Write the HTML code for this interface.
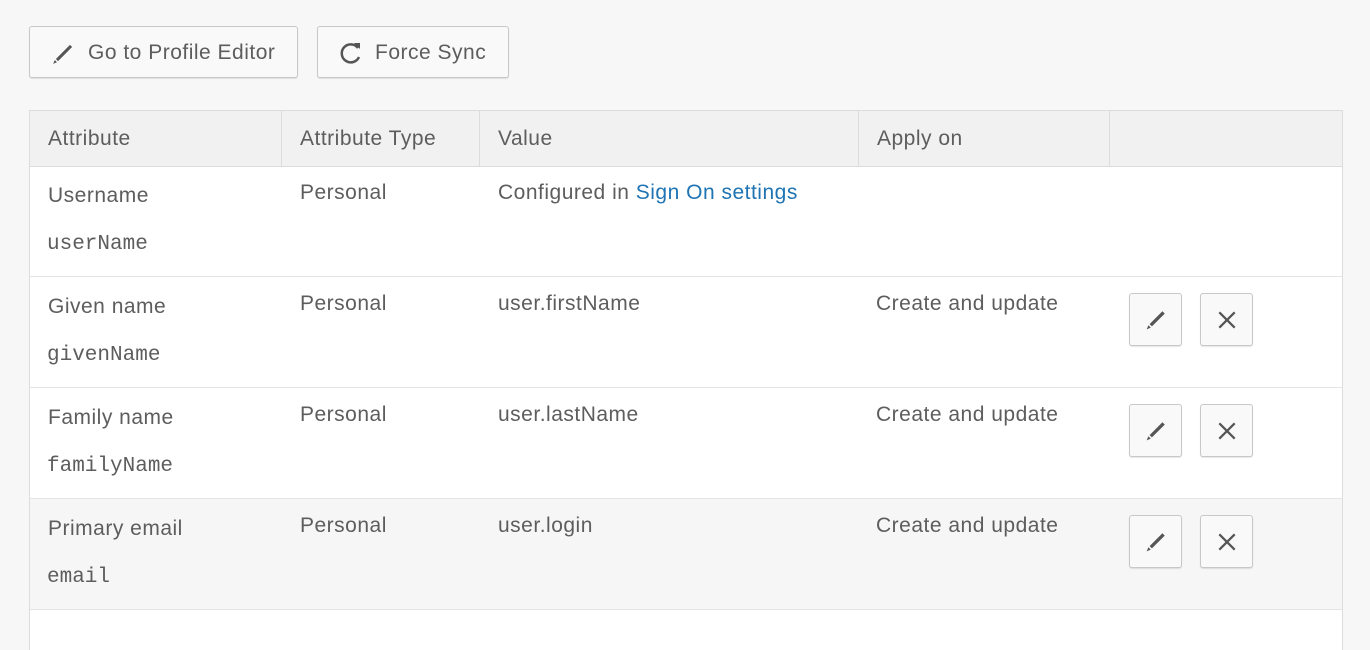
<!DOCTYPE html>
<html><head><style>
body{margin:0;width:1370px;height:644px;background:#f7f7f7;font-family:"Liberation Sans",sans-serif;color:#5d5d5d;overflow:hidden;position:relative;letter-spacing:0.5px}
.btn{position:absolute;top:26px;height:52px;border:1px solid #c8c8c8;border-radius:3px;background:#f9f9f9;box-shadow:0 1px 1px rgba(0,0,0,.1);font-size:21px;line-height:52px;box-sizing:border-box}
.tbl{position:absolute;left:29px;top:110px;width:1314px;height:540px;background:#fff;border:1px solid #dcdcdc;border-bottom:none;box-sizing:border-box}
.hdr{position:absolute;left:0;top:0;width:1312px;height:55px;background:#f1f1f1;border-bottom:1px solid #dcdcdc}
.hc{position:absolute;top:0;height:55px;line-height:55px;font-size:21px;padding-left:18px;border-right:1px solid #dcdcdc;box-sizing:border-box}
.row{position:absolute;left:0;width:1312px;height:111px;border-bottom:1px solid #e4e4e4;box-sizing:border-box}
.c{position:absolute;top:15px;font-size:21px}
.mono{position:absolute;left:17px;top:67px;font-family:"Liberation Mono",monospace;font-size:21px;letter-spacing:0}
.ab{position:absolute;top:16px;width:53px;height:53px;border:1px solid #c8c8c8;border-radius:3px;background:#f9f9f9;box-shadow:0 1px 1px rgba(0,0,0,.1);box-sizing:border-box;display:flex;align-items:center;justify-content:center}
</style></head><body>
<div class="btn" style="left:29px;width:269px;padding-left:58px">
<svg style="position:absolute;left:21px;top:14px" width="26" height="24" viewBox="0 0 24 22"><path d="M4.5 16.5 L17.5 3.5 L19.5 5.5 L6.5 18.5 Z" fill="#555"/><path d="M3.5 17.5 L5.5 19.5 L2 21 Z" fill="#555"/></svg>Go to Profile Editor</div>
<div class="btn" style="left:317px;width:192px;padding-left:57px">
<svg style="position:absolute;left:20px;top:13px" width="26" height="26" viewBox="0 0 26 26"><path d="M20 8 A9 9 0 1 0 21 17" fill="none" stroke="#555" stroke-width="2.5"/><path d="M16 3 L22 3 L22 9 Z" fill="#555"/></svg>Force Sync</div>
<div class="tbl">
<div class="hdr">
<div class="hc" style="left:0;width:252px">Attribute</div>
<div class="hc" style="left:252px;width:198px">Attribute Type</div>
<div class="hc" style="left:450px;width:379px">Value</div>
<div class="hc" style="left:829px;width:251px">Apply on</div>
</div>
<div class="row" style="top:55px"><div class="c" style="left:18px;top:18px">Username</div><div class="mono">userName</div><div class="c" style="left:270px">Personal</div><div class="c" style="left:468px">Configured in <span style="color:#1f74b3">Sign On settings</span></div></div>
<div class="row" style="top:166px"><div class="c" style="left:18px;top:18px">Given name</div><div class="mono">givenName</div><div class="c" style="left:270px">Personal</div><div class="c" style="left:468px">user.firstName</div><div class="c" style="left:846px">Create and update</div>
<div class="ab" style="left:1099px"><svg width="28" height="28" viewBox="0 0 24 24"><path d="M6.5 15.5 L17.5 4.5 L19.5 6.5 L8.5 17.5 Z" fill="#555"/><path d="M5.5 16.5 L7.5 18.5 L4 20 Z" fill="#555"/></svg></div>
<div class="ab" style="left:1170px"><svg width="22" height="22" viewBox="0 0 20 20"><path d="M3 3 L17 17 M17 3 L3 17" stroke="#555" stroke-width="2"/></svg></div></div>
<div class="row" style="top:277px"><div class="c" style="left:18px;top:18px">Family name</div><div class="mono">familyName</div><div class="c" style="left:270px">Personal</div><div class="c" style="left:468px">user.lastName</div><div class="c" style="left:846px">Create and update</div>
<div class="ab" style="left:1099px"><svg width="28" height="28" viewBox="0 0 24 24"><path d="M6.5 15.5 L17.5 4.5 L19.5 6.5 L8.5 17.5 Z" fill="#555"/><path d="M5.5 16.5 L7.5 18.5 L4 20 Z" fill="#555"/></svg></div>
<div class="ab" style="left:1170px"><svg width="22" height="22" viewBox="0 0 20 20"><path d="M3 3 L17 17 M17 3 L3 17" stroke="#555" stroke-width="2"/></svg></div></div>
<div class="row" style="top:388px;background:#f6f6f6"><div class="c" style="left:18px;top:18px">Primary email</div><div class="mono">email</div><div class="c" style="left:270px">Personal</div><div class="c" style="left:468px">user.login</div><div class="c" style="left:846px">Create and update</div>
<div class="ab" style="left:1099px"><svg width="28" height="28" viewBox="0 0 24 24"><path d="M6.5 15.5 L17.5 4.5 L19.5 6.5 L8.5 17.5 Z" fill="#555"/><path d="M5.5 16.5 L7.5 18.5 L4 20 Z" fill="#555"/></svg></div>
<div class="ab" style="left:1170px"><svg width="22" height="22" viewBox="0 0 20 20"><path d="M3 3 L17 17 M17 3 L3 17" stroke="#555" stroke-width="2"/></svg></div></div>
</div>
</body></html>
